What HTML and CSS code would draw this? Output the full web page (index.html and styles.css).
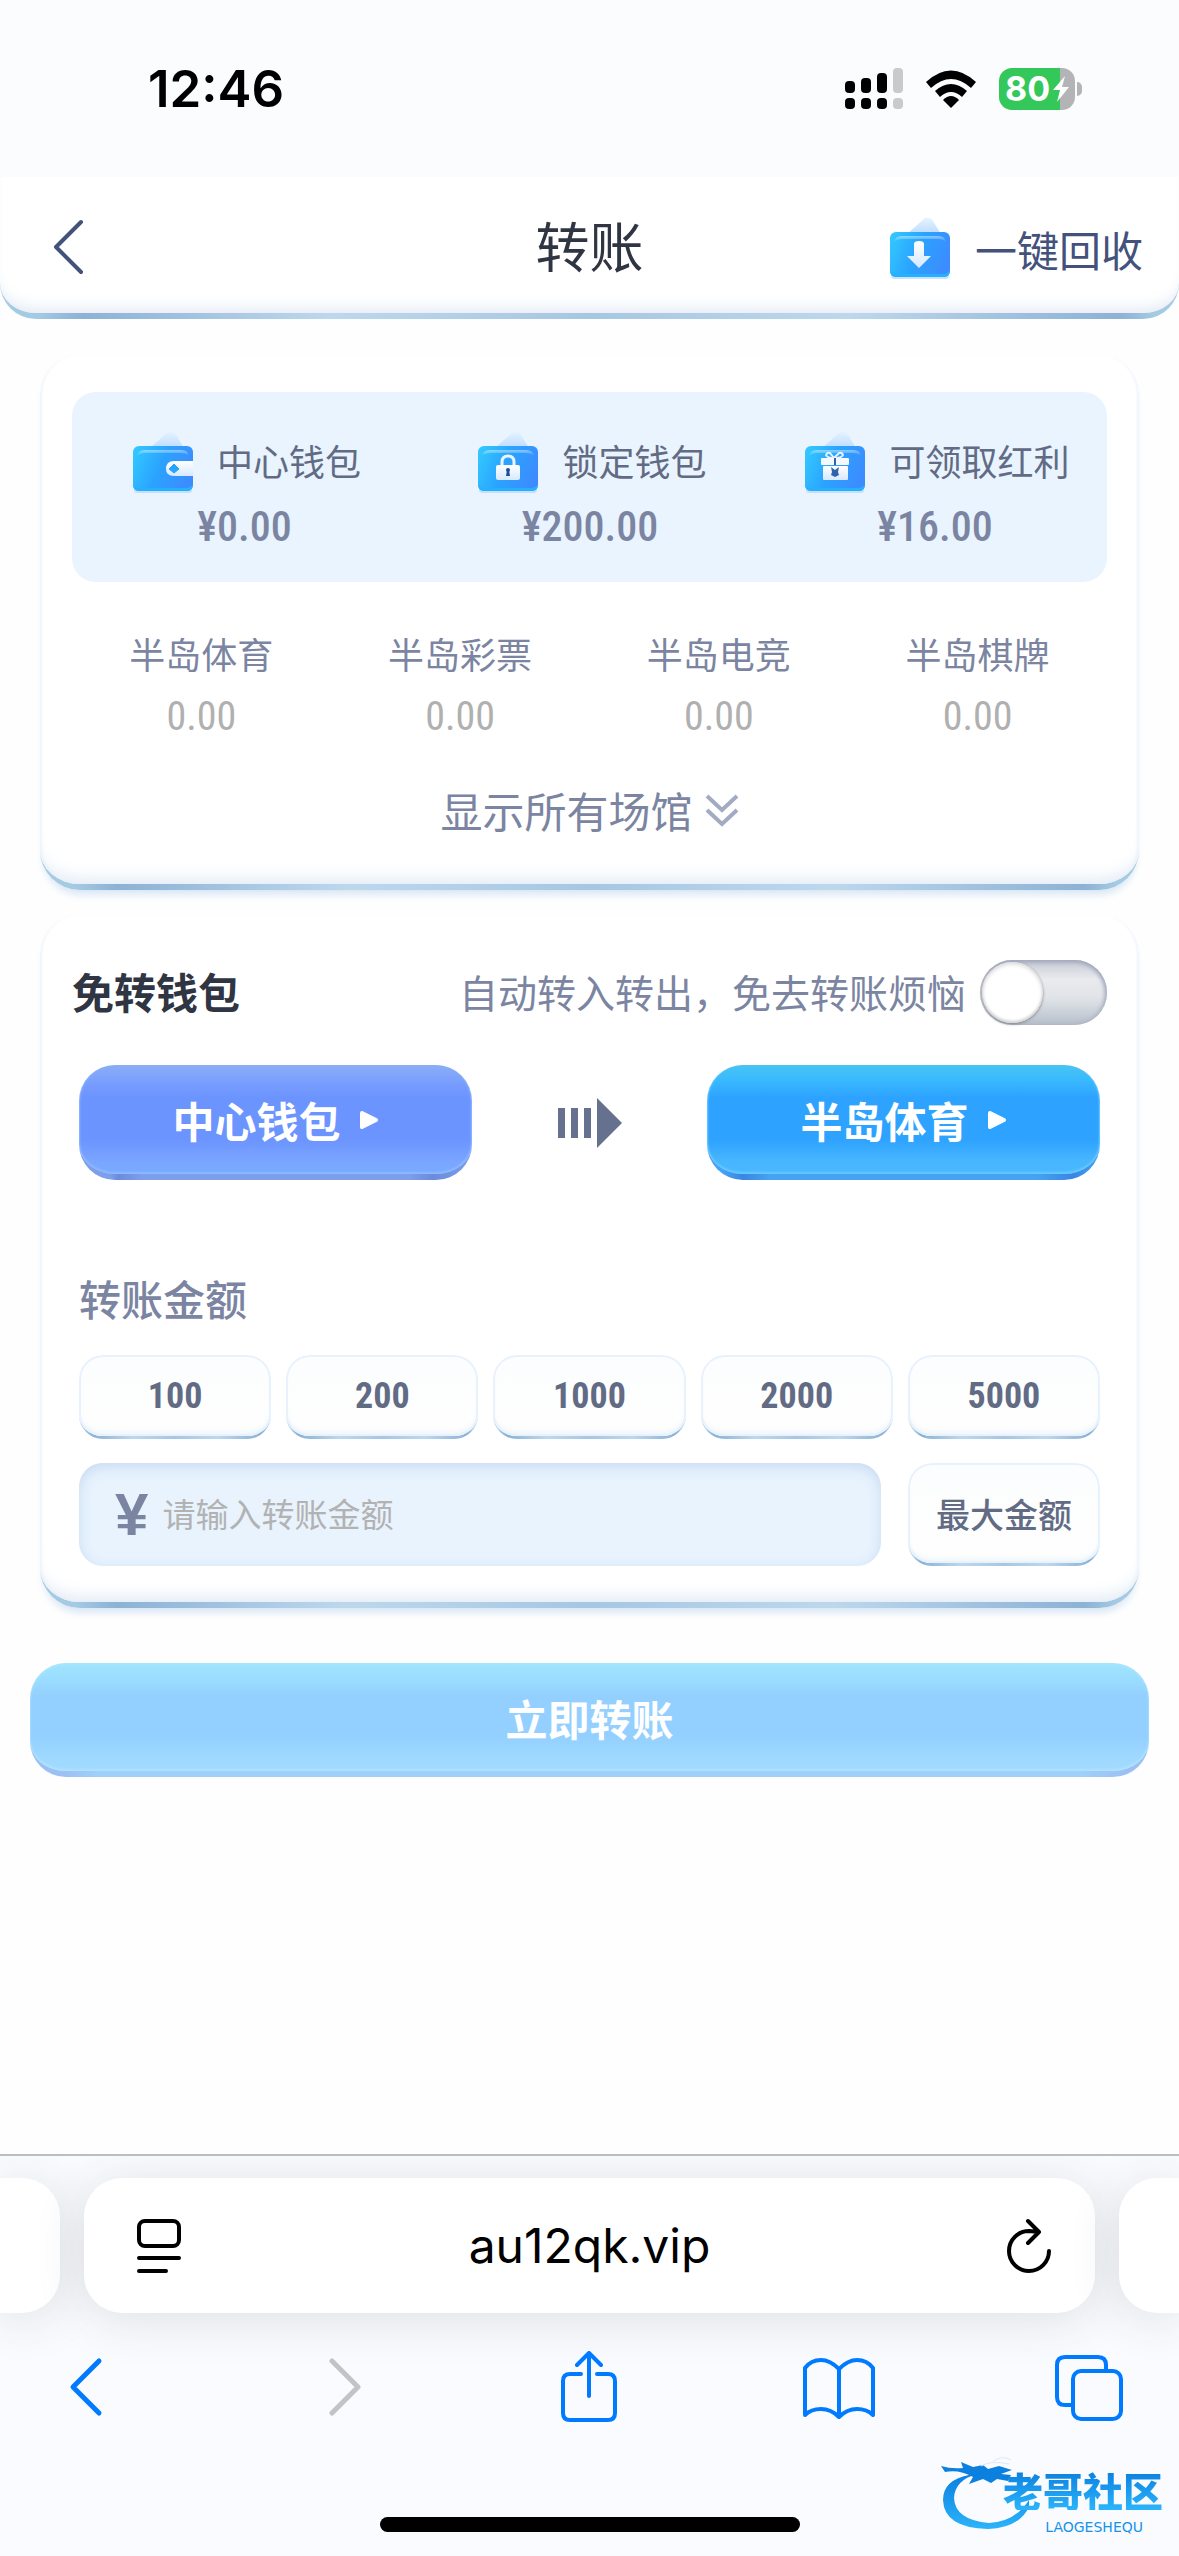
FILE: index.html
```html
<!DOCTYPE html>
<html lang="zh-CN">
<head>
<meta charset="utf-8">
<meta name="viewport" content="width=device-width, initial-scale=1">
<title>转账</title>
<link rel="stylesheet" href="styles.css">
</head>
<body>
<svg class="defs" width="0" height="0" aria-hidden="true">
  <defs>
    <linearGradient id="body" x1="0" y1="0.3" x2="1" y2="0.6">
      <stop offset="0" stop-color="#32c5ff"/><stop offset="0.45" stop-color="#2aa3ff"/><stop offset="1" stop-color="#3d8bff"/>
    </linearGradient>
    <linearGradient id="sheen" x1="0" y1="0" x2="0" y2="1">
      <stop offset="0" stop-color="#fff" stop-opacity="0.45"/><stop offset="1" stop-color="#fff" stop-opacity="0"/>
    </linearGradient>
    <linearGradient id="flap" x1="0" y1="0" x2="0" y2="1">
      <stop offset="0" stop-color="#e6f3ff"/><stop offset="1" stop-color="#bcdcff"/>
    </linearGradient>
    <linearGradient id="pale" x1="0" y1="0" x2="0" y2="1">
      <stop offset="0" stop-color="#ffffff"/><stop offset="1" stop-color="#d6e9ff"/>
    </linearGradient>
    <linearGradient id="ink" x1="0" y1="0" x2="0" y2="1">
      <stop offset="0" stop-color="#0a7fdf"/><stop offset="1" stop-color="#2bb4fb"/>
    </linearGradient>
    <symbol id="purse" viewBox="0 0 68 64">
      <path d="M22 17 L40 1 Q45 0 48 4 L56 17Z" fill="url(#flap)"/>
      <rect x="6" y="56" width="58" height="6" rx="3" fill="#b9d6fb" opacity="0.7"/>
      <rect x="5" y="15" width="60" height="45" rx="6" fill="url(#body)"/>
      <path d="M9 25 Q10 19 17 19 H53 Q60 19 61 25 Q58 22 52 22 H18 Q12 22 9 25Z" fill="url(#sheen)"/>
      <path d="M5 53 Q7 57 12 57 H58 Q63 57 65 53 Q65 60 59 60 H11 Q5 60 5 53Z" fill="#24b2ff"/>
    </symbol>
  </defs>
</svg>

<header class="status">
  <span class="time">12:46</span>
  <div class="signals">
    <svg width="58" height="42" viewBox="0 0 58 42" aria-hidden="true">
      <rect y="13" width="10" height="12" rx="4"/><rect x="16" y="10" width="10" height="15" rx="4"/><rect x="32" y="5" width="10" height="20" rx="4"/>
      <rect y="30" width="10" height="11" rx="4"/><rect x="16" y="30" width="10" height="11" rx="4"/><rect x="32" y="30" width="10" height="11" rx="4"/>
      <g fill="#c9cacc"><rect x="48" width="10" height="25" rx="4"/><rect x="48" y="30" width="10" height="11" rx="4"/></g>
    </svg>
    <svg width="52" height="38" viewBox="0 0 52 38" aria-hidden="true">
      <path d="M1 12 Q26 -11 51 12 L46 18 Q26 0 6 18Z"/>
      <path d="M10 21 Q26 7 42 21 L37 27 Q26 17 15 27Z"/>
      <path d="M18 30 Q26 22 34 30 L26 38Z"/>
    </svg>
    <div class="battery"><span>80</span>
      <svg class="bolt" width="16" height="26" viewBox="0 0 16 26" aria-hidden="true"><path d="M12 0 L0 14 H7 L4 26 L16 11 H9Z" fill="#fff"/></svg>
    </div>
  </div>
</header>

<nav class="topbar">
  <button class="back" aria-label="返回"><svg width="32" height="56" viewBox="0 0 32 56"><path d="M29 3 L4 28 L29 53" fill="none" stroke="#43527c" stroke-width="4" stroke-linecap="round" stroke-linejoin="round"/></svg></button>
  <h1>转账</h1>
  <button class="recall">
    <svg width="68" height="64" viewBox="0 0 68 64"><use href="#purse"/><path d="M29 27 Q29 24 34 24 Q39 24 39 27 V39 H46 L34 51 L22 39 H29Z" fill="url(#pale)"/></svg>
    一键回收
  </button>
</nav>

<main>
  <section class="card">
    <div class="wallets">
      <div class="wallet">
        <div class="wallet-name">
          <svg width="68" height="64" viewBox="0 0 68 64"><use href="#purse"/><path d="M65 30 H46 Q38 30 38 38 Q38 45 46 45 H65Z" fill="url(#pale)"/><path d="M46 33 L51 38 L46 42 L41 38Z" fill="#27a4ff" stroke="#27a4ff" stroke-width="1" stroke-linejoin="round"/></svg>
          中心钱包
        </div>
        <div class="amount">¥0.00</div>
      </div>
      <div class="wallet">
        <div class="wallet-name">
          <svg width="68" height="64" viewBox="0 0 68 64"><use href="#purse"/><path d="M29 36 V31 Q29 25 35 25 Q41 25 41 31 V36" fill="none" stroke="#eaf4ff" stroke-width="3"/><rect x="23" y="34" width="24" height="15" rx="2" fill="url(#pale)"/><circle cx="35" cy="39" r="2" fill="#1f4d9c"/><path d="M34 39 H36 L37 45 H33Z" fill="#1f4d9c"/></svg>
          锁定钱包
        </div>
        <div class="amount">¥200.00</div>
      </div>
      <div class="wallet">
        <div class="wallet-name">
          <svg width="68" height="64" viewBox="0 0 68 64"><use href="#purse"/><path d="M34 27 L30 22 Q27 21 26 24 Q27 27 34 27 Q42 27 43 24 Q42 21 39 22Z" fill="none" stroke="#e4f1ff" stroke-width="2"/><rect x="21" y="27" width="28" height="7" rx="1" fill="#f4f9ff"/><rect x="23" y="35" width="25" height="14" rx="1" fill="url(#pale)"/><path d="M34 27 H36 V34 H34Z M31 36 L35 39 L39 36 L38 41 L39 44 L35 46 L31 44 L32 41Z" fill="#2e63ad"/></svg>
          可领取红利
        </div>
        <div class="amount">¥16.00</div>
      </div>
    </div>
    <dl class="venues">
      <div><dt>半岛体育</dt><dd>0.00</dd></div>
      <div><dt>半岛彩票</dt><dd>0.00</dd></div>
      <div><dt>半岛电竞</dt><dd>0.00</dd></div>
      <div><dt>半岛棋牌</dt><dd>0.00</dd></div>
    </dl>
    <button class="show-all">显示所有场馆
      <svg width="34" height="34" viewBox="0 0 34 34"><path d="M2 3 L17 17 L32 3 M2 17 L17 31 L32 17" fill="none" stroke="#a3abc2" stroke-width="4"/></svg>
    </button>
  </section>

  <section class="card transfer">
    <div class="auto">
      <h2>免转钱包</h2>
      <label for="auto">自动转入转出，免去转账烦恼</label>
      <input type="checkbox" id="auto" class="toggle">
    </div>
    <div class="route">
      <button class="pick from">中心钱包<svg width="20" height="20" viewBox="0 0 20 20"><path d="M3 3 L17 10 L3 17Z" fill="#fff" stroke="#fff" stroke-width="4" stroke-linejoin="round"/></svg></button>
      <svg width="64" height="50" viewBox="0 0 64 50" aria-hidden="true"><path d="M0 10h7v30h-7Z M13 10h7v30h-7Z M26 10h7v30h-7Z M39 0 L64 25 L39 50Z" fill="#66718f"/></svg>
      <button class="pick to">半岛体育<svg width="20" height="20" viewBox="0 0 20 20"><path d="M3 3 L17 10 L3 17Z" fill="#fff" stroke="#fff" stroke-width="4" stroke-linejoin="round"/></svg></button>
    </div>
    <label class="field-label" for="money">转账金额</label>
    <div class="chips">
      <button class="chip">100</button>
      <button class="chip">200</button>
      <button class="chip">1000</button>
      <button class="chip">2000</button>
      <button class="chip">5000</button>
    </div>
    <div class="entry">
      <div class="money-box">
        <span>¥</span>
        <input type="text" id="money" placeholder="请输入转账金额">
      </div>
      <button class="chip max">最大金额</button>
    </div>
  </section>

  <button class="submit">立即转账</button>
</main>

<footer class="browser">
  <div class="tabs">
    <div class="tab side"></div>
    <div class="tab current">
      <button aria-label="页面设置"><svg width="46" height="56" viewBox="0 0 46 56"><g fill="none" stroke="#000" stroke-width="4" stroke-linecap="round"><rect x="3" y="3" width="40" height="25" rx="6"/><path d="M3 40 H43 M3 53 H30"/></g></svg></button>
      <a href="#">au12qk.vip</a>
      <button class="reload" aria-label="重新载入"><svg width="46" height="56" viewBox="0 0 46 56"><path d="M43 33 A20 20 0 1 1 23 13 L33 14 M22 3 L33 14 L22 25" fill="none" stroke="#000" stroke-width="4" stroke-linecap="round" stroke-linejoin="round"/></svg></button>
    </div>
    <div class="tab side"></div>
  </div>
  <div class="tools">
    <button aria-label="后退"><svg width="46" height="72" viewBox="0 0 46 72"><path d="M34 10 L8 36 L34 62" fill="none" stroke="#007aff" stroke-width="5" stroke-linecap="round" stroke-linejoin="round"/></svg></button>
    <button aria-label="前进" disabled><svg width="46" height="72" viewBox="0 0 46 72"><path d="M17 10 L43 36 L17 62" fill="none" stroke="#c2c3c6" stroke-width="5" stroke-linecap="round" stroke-linejoin="round"/></svg></button>
    <button aria-label="分享"><svg width="58" height="72" viewBox="0 0 58 72"><path d="M21 23 H10 Q3 23 3 30 V62 Q3 69 10 69 H48 Q55 69 55 62 V30 Q55 23 48 23 H37 M29 45 V3 M17 14 L29 2 L41 14" fill="none" stroke="#007aff" stroke-width="4" stroke-linecap="round" stroke-linejoin="round"/></svg></button>
    <button aria-label="书签"><svg width="72" height="72" viewBox="0 0 72 72"><path d="M36 18 Q27 9 18 9 Q8 9 2 17 V64 Q8 58 18 58 Q28 58 36 66 Q44 58 54 58 Q64 58 70 64 V17 Q64 9 54 9 Q45 9 36 18 V66" fill="none" stroke="#007aff" stroke-width="4" stroke-linejoin="round"/></svg></button>
    <button aria-label="标签页"><svg width="68" height="72" viewBox="0 0 68 72"><g fill="none" stroke="#007aff" stroke-width="4"><rect x="18" y="20" width="48" height="48" rx="8"/><path d="M18 54 H10 Q2 54 2 46 V14 Q2 6 10 6 H43 Q51 6 51 14 V20"/></g></svg></button>
  </div>
  <div class="home"></div>
  <div class="brand">
    <svg width="96" height="76" viewBox="0 0 96 76" aria-hidden="true">
      <path d="M28 21 Q2 26 2 46 Q3 74 47 75 Q78 74 88 53 V46 Q74 68 48 69 Q14 66 13 44 Q14 26 36 20Z" fill="url(#ink)"/>
      <path d="M0 12 Q10 15 22 14 L20 8 L32 13 L42 11 L47 15 L58 12 L71 16 L60 20 L70 21 L67 27 L56 25 L50 29 L42 25 L28 30 L32 23 Q18 15 4 18Z" fill="#0c80df"/>
      <path d="M40 12 Q50 6 68 10 M52 7 Q62 1 70 6" fill="none" stroke="#dceafa" stroke-width="1"/>
    </svg>
    <div class="brand-name">老哥社区</div>
    <div class="brand-latin">LAOGESHEQU</div>
  </div>
</footer>
</body>
</html>
```

FILE: styles.css
```css
* { box-sizing: border-box; }

:root {
  --rim: linear-gradient(90deg, #a5cbe4 0, #a5cbe4 3%, #8cb2d5 7%, #bdd8ed 28%, #a6c7e2 50%, #bdd8ed 72%, #8cb2d5 95%, #a5cbe4 98%);
  --numbers: "Liberation Sans Narrow", "Roboto Condensed", "Liberation Sans", sans-serif;
}

body {
  margin: 0;
  min-height: 100vh;
  display: flex;
  flex-direction: column;
  background: #fefefe;
  font-family: "Noto Sans CJK SC", sans-serif;
  color: #2f3542;
}

button, input {
  font: inherit;
  color: inherit;
  border: 0;
  padding: 0;
  margin: 0;
  background: none;
}

svg { display: block; flex: none; }
.defs { position: absolute; }

.status {
  height: 177px;
  padding: 36px 104px 36px 148px;
  display: flex;
  align-items: center;
  justify-content: space-between;
  background: #fbfcfe;
  color: #000;
  font-family: Inter, sans-serif;
}
.time { font-size: 51px; font-weight: 600; line-height: 60px; }
.signals { display: flex; align-items: center; gap: 22px; }
.battery {
  position: relative;
  width: 76px;
  height: 42px;
  padding-left: 6px;
  border-radius: 13px;
  background: linear-gradient(90deg, #34c759 80%, #b3b4b6 80%);
  color: #fff;
  font-size: 34px;
  font-weight: 700;
  line-height: 42px;
}
.battery::after {
  content: "";
  position: absolute;
  left: 78px;
  top: 14px;
  width: 5px;
  height: 14px;
  border-radius: 0 5px 5px 0;
  background: #b3b4b6;
}
.bolt { position: absolute; right: 6px; top: 8px; }

.topbar {
  display: grid;
  grid-template-columns: 1fr auto 1fr;
  align-items: center;
  height: 142px;
  padding: 4px 36px 0;
  border-bottom: 6px solid transparent;
  border-radius: 0 0 36px 36px;
  background: linear-gradient(#fff, #fff) padding-box, var(--rim) 0 100% / 100% 46px no-repeat border-box;
  box-shadow: inset 0 -14px 16px -10px #e2e9f3;
}
.back { justify-self: start; padding: 0 16px; }
h1 { margin: 0; font-size: 54px; font-weight: 400; line-height: 72px; padding-bottom: 4px; }
.recall {
  justify-self: end;
  display: flex;
  align-items: center;
  gap: 22px;
  padding-top: 3px;
  font-size: 42px;
  line-height: 60px;
  color: #43527c;
}

main { flex: 1; }

.card {
  margin: 35px 40px 0;
  padding: 38px 32px 44px;
  border-bottom: 6px solid transparent;
  border-radius: 40px;
  background: linear-gradient(#fff, #fff) padding-box, var(--rim) 0 100% / 100% 46px no-repeat border-box;
  box-shadow: inset 0 -16px 18px -12px #dfe8f4, inset 3px 0 3px -1px #f2f6fc, inset -3px 0 3px -1px #f2f6fc, 0 8px 8px -4px #d3e3f2;
}
.wallets {
  display: grid;
  grid-template-columns: repeat(3, 1fr);
  padding: 39px 0 23px;
  border-radius: 24px;
  background: #e9f4ff;
}
.wallet + .wallet { border-left: 1px solid #ebf3fc; }
.wallet-name {
  display: flex;
  justify-content: center;
  align-items: flex-start;
  gap: 21px;
  font-size: 36px;
  line-height: 58px;
  color: #626b84;
}
.amount {
  text-align: center;
  font-family: var(--numbers);
  font-size: 42px;
  font-weight: 500;
  line-height: 64px;
  color: #7b85a2;
}
.venues {
  display: grid;
  grid-template-columns: repeat(4, 1fr);
  margin: 47px 0 0;
  text-align: center;
}
.venues dt { font-size: 36px; line-height: 48px; color: #7b85a2; }
.venues dd {
  margin: 16px 0 0;
  font-family: var(--numbers);
  font-size: 40px;
  line-height: 48px;
  color: #b0b0b0;
}
.show-all {
  display: flex;
  align-items: center;
  gap: 12px;
  margin: 39px auto 0;
  font-size: 42px;
  line-height: 60px;
  color: #7b85a2;
}

.transfer { margin-top: 24px; padding: 45px 32px 36px; }
.auto { display: flex; align-items: center; gap: 14px; height: 66px; }
h2 { margin: 0 auto 0 0; font-size: 42px; font-weight: 700; line-height: 60px; padding-bottom: 2px; }
.auto label { font-size: 39px; line-height: 60px; color: #7b85a2; padding-bottom: 2px; }
.toggle {
  appearance: none;
  width: 127px;
  height: 65px;
  padding: 2px;
  border-radius: 33px;
  background: linear-gradient(#c6cad5, #e9ebee 30%, #dfe3e7 60%, #b6bfca);
  box-shadow: inset 0 2px 5px #9da3b8, inset -2px 0 4px #b4bac8;
}
.toggle::before {
  content: "";
  display: block;
  width: 61px;
  height: 61px;
  border-radius: 50%;
  background: #fff;
  box-shadow: inset 0 2px 4px #d8d4d4, inset 0 -2px 3px #d0d0d0, 0 1px 3px #7d8189;
}
.toggle:checked::before { margin-left: auto; }

.route, .chips, .entry { margin: 24px 7px 0; display: flex; }
.route { margin-top: 40px; align-items: center; justify-content: space-between; }
.pick {
  flex: 0 1 393px;
  display: flex;
  align-items: center;
  justify-content: center;
  gap: 18px;
  height: 115px;
  border-bottom: 6px solid transparent;
  border-radius: 36px;
  color: #fff;
  font-size: 42px;
  font-weight: 700;
  line-height: 60px;
}
.from {
  background: linear-gradient(#8aaef5, #779cff 18%, #6b94ff 30%, #6b94ff 68%, #7aa5ff 88%, #76abff) padding-box, linear-gradient(90deg, #7d9eea 8%, #6b8bdd 10%, #7d9eea 16%, #7d9eea 84%, #6b8bdd 90%, #7d9eea) border-box;
  box-shadow: inset 0 -2px 2px #8fb8ff, inset 2px 0 2px -1px #8fb8ff, inset -2px 0 2px -1px #8fb8ff;
}
.to {
  background: linear-gradient(#48c4f3, #38b8ff 15%, #2da2ff 30%, #2da2ff 68%, #48b6ff 88%, #4ab8ff) padding-box, linear-gradient(90deg, #45a2f4 4%, #3b85e3 9%, #45a2f4 16%, #45a2f4 84%, #3b85e3 93%, #45a2f4) border-box;
  box-shadow: inset 0 -2px 2px #66c9ff, inset 2px 0 2px -1px #66c9ff, inset -2px 0 2px -1px #66c9ff;
}
.field-label {
  display: block;
  margin: 88px 7px 0;
  font-size: 42px;
  font-weight: 500;
  line-height: 60px;
  color: #7b85a2;
}
.chips { gap: 15px; margin-top: 27px; }
.chip {
  flex: 1;
  height: 84px;
  border-bottom: 3px solid transparent;
  border-radius: 24px;
  background: linear-gradient(#fcfdfe, #fefefe) padding-box, var(--rim) 0 100% / 100% 26px no-repeat border-box;
  box-shadow: inset 0 0 0 2px #e8f2fd, inset 0 -5px 6px -2px #eaf2fb;
  font-family: var(--numbers);
  font-size: 36px;
  font-weight: 700;
  color: #626b84;
}
.entry { gap: 27px; }
.money-box {
  flex: 1;
  display: flex;
  align-items: center;
  gap: 14px;
  height: 103px;
  padding: 0 36px;
  border-radius: 24px;
  background: #e8f3fe;
  box-shadow: inset 0 4px 14px #c8daf0;
  color: #7b85a2;
}
.money-box span { font: 700 60px/60px "Liberation Sans", sans-serif; }
.money-box input { flex: 1; min-width: 0; font-size: 33px; line-height: 60px; outline: 0; padding-bottom: 3px; }
.money-box input::placeholder { color: #b2b2b2; opacity: 1; }
.max { flex: 0 0 192px; height: 103px; font-family: inherit; font-size: 34px; font-weight: 500; }

.submit {
  display: block;
  width: calc(100% - 60px);
  height: 114px;
  margin: 55px 30px 60px;
  border-bottom: 6px solid transparent;
  border-radius: 36px;
  background: linear-gradient(#a0e4ff, #99dbff 18%, #94d0ff 30%, #94d0ff 68%, #9fd9ff 88%, #a2daff) padding-box, linear-gradient(90deg, #9cc0f3 3%, #9ed0fb 6%, #9ed0fb 94%, #9cc0f3 98%) border-box;
  box-shadow: inset 0 -2px 2px #b1e3ff, inset 0 2px 2px #a6e6fb;
  color: #fff;
  font-size: 42px;
  font-weight: 700;
}

.browser {
  position: relative;
  border-top: 2px solid #bcbdc3;
  background: #fafbfe;
  overflow: hidden;
}
.tabs { display: flex; gap: 24px; padding-top: 22px; }
.tab {
  height: 135px;
  border-radius: 38px;
  background: #fff;
  box-shadow: 0 6px 50px rgba(40, 55, 60, 0.14);
}
.side { flex: 0 0 60px; }
.side:first-child { border-radius: 0 38px 38px 0; }
.side:last-child { border-radius: 38px 0 0 38px; }
.current {
  flex: 1;
  display: flex;
  align-items: center;
  justify-content: space-between;
  padding: 0 43px 0 52px;
}
.current a { font: 400 48px/60px Inter, sans-serif; color: #000; text-decoration: none; }
.reload { padding-left: 9px; }
.tools {
  position: relative;
  display: flex;
  justify-content: space-between;
  padding: 38px 54px 0 52px;
}
.tools button { width: 72px; display: flex; justify-content: center; }
.home {
  width: 420px;
  height: 15px;
  margin: 94px auto 24px;
  border-radius: 8px;
  background: #000;
}
.brand { position: absolute; right: 16px; bottom: 20px; width: 222px; height: 82px; color: #1593ea; }
.brand svg { position: absolute; left: 0; top: 0; }
.brand-name {
  position: absolute;
  right: 0;
  top: 16px;
  font-size: 40px;
  font-weight: 900;
  line-height: 40px;
  background: linear-gradient(#0a7fdf, #2bb4fb);
  background-clip: text;
  color: transparent;
}
.brand-latin { position: absolute; right: 20px; top: 66px; font: 400 14px/14px "DejaVu Sans", sans-serif; }
```
